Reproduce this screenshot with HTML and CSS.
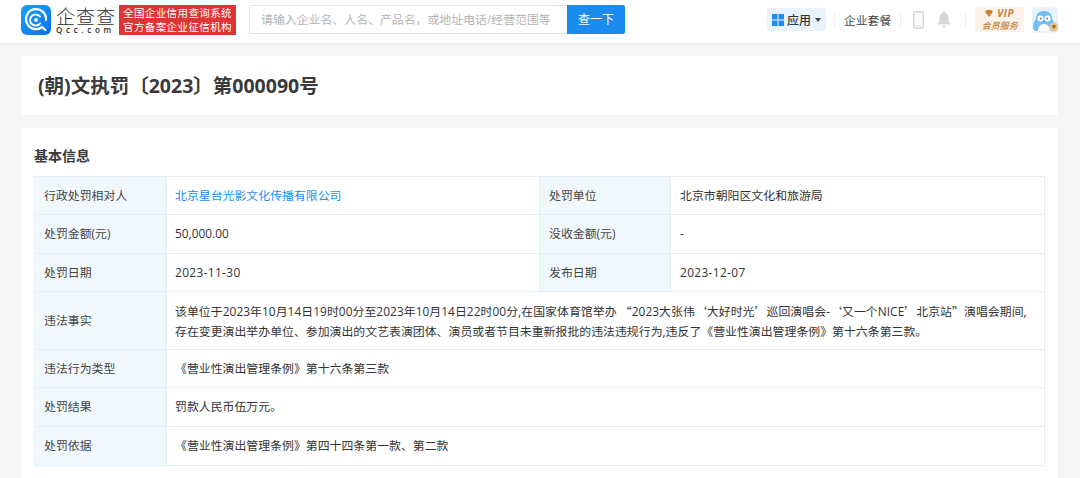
FILE: index.html
```html
<!DOCTYPE html>
<html lang="zh">
<head>
<meta charset="utf-8">
<title>(朝)文执罚〔2023〕第000090号</title>
<link rel="stylesheet" href="styles.css">
</head>
<body>
<header class="topbar">
  <div class="brand">
    <svg class="logo" viewBox="0 0 30 30" width="30" height="30">
      <defs><linearGradient id="lg" x1="0" y1="0" x2="1" y2="1"><stop offset="0" stop-color="#1aa3ff"/><stop offset="1" stop-color="#0a6fe8"/></linearGradient></defs>
      <rect width="30" height="30" rx="6" fill="url(#lg)"/>
      <path d="M20.5 22.5A10 10 0 1 1 25 15" fill="none" stroke="#fff" stroke-width="2.2" stroke-linecap="round"/>
      <path d="M19 18.5A5.6 5.6 0 1 1 19 11.5" fill="none" stroke="#fff" stroke-width="2" stroke-linecap="round"/>
      <circle cx="15" cy="15" r="1.9" fill="#fff"/>
      <path d="M21 22l3.5 3" stroke="#fff" stroke-width="2.2" stroke-linecap="round"/>
    </svg>
    <div class="wordmark">
      <div class="wm-cn">企查查</div>
      <div class="wm-en">Qcc.com</div>
    </div>
    <div class="stamp">全国企业信用查询系统<br>官方备案企业征信机构</div>
  </div>
  <div class="search">
    <div class="search-input">请输入企业名、人名、产品名，或地址电话/经营范围等</div>
    <div class="search-btn">查一下</div>
  </div>
  <nav class="nav">
    <div class="apps">
      <svg viewBox="0 0 12 12" width="12" height="12"><rect width="5.5" height="5.5" fill="#1f8ef0"/><rect x="6.5" width="5.5" height="5.5" fill="#1f8ef0"/><rect y="6.5" width="5.5" height="5.5" fill="#1f8ef0"/><rect x="6.5" y="6.5" width="5.5" height="5.5" fill="#1f8ef0"/></svg>
      <span>应用</span>
      <i class="caret"></i>
    </div>
    <i class="sep"></i>
    <span class="nav-link">企业套餐</span>
    <i class="sep"></i>
    <svg class="ico-phone" viewBox="0 0 11 18" width="11" height="18"><rect x="0.7" y="0.7" width="9.6" height="16.6" rx="1.8" fill="#fafafa" stroke="#d4d4d4" stroke-width="1.4"/><path d="M3 14.8h5" stroke="#d4d4d4"/></svg>
    <svg class="ico-bell" viewBox="0 0 14 17" width="14" height="17"><path d="M7 0.5a1.3 1.3 0 0 1 1.3 1.4C10.8 2.5 11.7 4.7 11.7 7v3.6L13.6 13.6H.4L2.3 10.6V7c0-2.3.9-4.5 3.4-5.1A1.3 1.3 0 0 1 7 .5z" fill="#d6d6d6"/><path d="M5.2 14.6h3.6a1.8 1.8 0 0 1-3.6 0z" fill="#d6d6d6"/></svg>
    <i class="sep"></i>
    <div class="vip">
      <div class="vip-top"><svg viewBox="0 0 9 8" width="8" height="7"><path d="M0 2l2-2h5l2 2-4.500 6z" fill="#c9803a"/></svg><b>VIP</b></div>
      <div class="vip-sub">会员服务</div>
    </div>
    <div class="avatar">
      <svg viewBox="0 0 26 26" width="26" height="26">
        <rect width="26" height="26" rx="4" fill="#e6f3ff"/>
        <path d="M12 4c5 0 8 3 8 8 2 2 3 5 3 8 0 2-1 4-3 4H4c-2 0-3-2-3-4 0-3 1-6 3-8 0-5 3-8 8-8z" fill="#74bdf6"/>
        <circle cx="8.500" cy="11.500" r="3" fill="#fff"/><circle cx="15.500" cy="11.500" r="3" fill="#fff"/>
        <circle cx="8.800" cy="11.500" r="1" fill="#5d7f9c"/><circle cx="15.200" cy="11.500" r="1" fill="#5d7f9c"/>
        <path d="M6 24c0-5 3-7 6-7s6 2 6 7z" fill="#fff"/>
        <circle cx="22" cy="20" r="4.500" fill="#e9c79a"/>
        <path d="M19.800 19l1-1h2.400l1 1-2.200 3z" fill="#a5672c"/>
      </svg>
    </div>
  </nav>
</header>

<main class="page">
  <section class="card title-card">
    <h1>(朝)文执罚〔2023〕第000090号</h1>
  </section>
  <section class="card info-card">
    <h2>基本信息</h2>
    <table class="info">
      <colgroup><col class="c-label"><col class="c-val"><col class="c-label2"><col></colgroup>
      <tr class="r38"><th>行政处罚相对人</th><td><a>北京星台光影文化传播有限公司</a></td><th>处罚单位</th><td class="v4">北京市朝阳区文化和旅游局</td></tr>
      <tr class="r39"><th>处罚金额(元)</th><td>50,000.00</td><th>没收金额(元)</th><td class="v4">-</td></tr>
      <tr class="r38"><th>处罚日期</th><td class="date">2023-11-30</td><th>发布日期</th><td class="v4 date">2023-12-07</td></tr>
      <tr class="r58"><th>违法事实</th><td colspan="3"><span class="line-one">该单位于2023年10月14日19时00分至2023年10月14日22时00分,在国家体育馆举办 <span class="q">“</span>2023大张伟<span class="q">‘</span>大好时光<span class="q">’</span>巡回演唱会-<span class="q">‘</span>又一个NICE<span class="q">’</span>北京站<span class="q">”</span>演唱会期间,</span><br>存在变更演出举办单位、参加演出的文艺表演团体、演员或者节目未重新报批的违法违规行为,违反了《营业性演出管理条例》第十六条第三款。</td></tr>
      <tr class="r38"><th>违法行为类型</th><td colspan="3">《营业性演出管理条例》第十六条第三款</td></tr>
      <tr class="r39"><th>处罚结果</th><td colspan="3">罚款人民币伍万元。</td></tr>
      <tr class="r39"><th>处罚依据</th><td colspan="3">《营业性演出管理条例》第四十四条第一款、第二款</td></tr>
    </table>
  </section>
</main>
</body>
</html>
```
FILE: styles.css
```css
* { box-sizing: border-box; }
html, body { margin: 0; padding: 0; height: 478px; overflow: hidden; }
body {
  background: #f6f6f6;
  color: #333;
  font-family: "Open Sans", "Noto Sans CJK SC", sans-serif;
  font-size: 13px;
}
.topbar {
  height: 43px;
  background: #fff;
  box-shadow: 0 1px 3px rgba(0,0,0,.08);
  display: flex;
  align-items: center;
  padding: 0 0 4px 21px;
}
.brand { display: flex; align-items: center; }
.logo { display: block; }
.wordmark { margin-left: 5px; width: 59px; color: #2e2e2e; }
.wm-cn { font-size: 19px; line-height: 21px; letter-spacing: 1px; white-space: nowrap; font-family: "Noto Sans CJK SC", sans-serif; font-weight: 300; }
.wm-en { font-size: 8px; line-height: 8px; letter-spacing: 3.700px; font-weight: 600; white-space: nowrap; }
.stamp {
  margin-left: 4px;
  width: 117px;
  height: 30px;
  background: #e03333;
  color: #fff;
  font-size: 10.500px;
  line-height: 14px;
  padding: 1px 0 0 4px;
  white-space: nowrap;
  letter-spacing: .400px;
}
.search { display: flex; margin-left: 13px; height: 29px; }
.search-input {
  width: 318px;
  border: 1px solid #e4e4e4;
  border-right: 0;
  border-radius: 2px 0 0 2px;
  color: #b5b5b5;
  font-size: 11.900px;
  line-height: 27px;
  padding-left: 11px;
  white-space: nowrap;
}
.search-btn {
  width: 58px;
  background: #1a8cf0;
  color: #fff;
  text-align: center;
  line-height: 29px;
  font-size: 12px;
  border-radius: 0 2px 2px 0;
}
.nav { display: flex; align-items: center; margin-left: 142px; }
.apps {
  width: 59px;
  height: 23px;
  background: #e9f3fe;
  border-radius: 3px;
  display: flex;
  align-items: center;
  padding-left: 5px;
  font-weight: 500;
  font-size: 12px;
  color: #333;
}
.apps span { margin-left: 3px; }
.caret {
  margin-left: 4px;
  border: 3.500px solid transparent;
  border-top: 4px solid #444;
  border-bottom: 0;
}
.sep { width: 1px; height: 14px; background: #eee; }
.apps + .sep { margin-left: 8px; }
.nav-link { margin: 0 9px; font-size: 11.800px; color: #444; white-space: nowrap; }
.ico-phone { margin-left: 12px; }
.ico-bell { margin-left: 13px; }
.ico-bell + .sep { margin-left: 14px; }
.vip {
  margin-left: 9px;
  width: 49px;
  height: 25px;
  background: #fdf3ea;
  color: #c9803a;
  text-align: center;
}
.vip-top { display: flex; align-items: center; justify-content: center; gap: 4px; height: 13px; }
.vip-top b { font-size: 10px; font-style: italic; line-height: 13px; letter-spacing: .500px; }
.vip-sub { font-size: 9px; line-height: 11px; font-weight: 500; font-style: italic; white-space: nowrap; }
.avatar { margin-left: 8px; height: 26px; }
.avatar svg { display: block; }

.page { padding: 13px 22px 0 21px; }
.card { background: #fff; border-radius: 3px; }
.title-card { height: 59px; padding: 0 17px; display: flex; align-items: center; }
h1 { margin: 0; font-size: 19.500px; font-weight: 700; color: #3a3a3a; line-height: 24px; white-space: nowrap; }
.info-card { margin-top: 13px; height: 360px; padding: 0 13px; }
h2 { margin: 0; padding-top: 18px; height: 48px; font-size: 14px; line-height: 20px; font-weight: 700; color: #3a3a3a; }
.info { width: 1011px; border-collapse: collapse; table-layout: fixed; }
.c-label { width: 132px; }
.c-val { width: 373px; }
.c-label2 { width: 131px; }
.info th, .info td {
  border: 1px solid #e4eff7;
  padding: 0 8px 2px;
  font-size: 11.900px;
  font-weight: 400;
  text-align: left;
  color: #333;
  line-height: 20px;
  white-space: nowrap;
}
.info th { background: #f1f8fc; color: #444; padding-left: 9px; }
.info td.v4 { padding-left: 9px; }
.info td.date { letter-spacing: .350px; }
.info a { color: #1f8ef0; }
.info .r58 td { padding-bottom: 0; }
.line-one { letter-spacing: .040px; }
.q { font-family: "Noto Sans CJK SC", sans-serif; }
.r38 { height: 38px; }
.r39 { height: 39px; }
.r58 { height: 58px; }
```
